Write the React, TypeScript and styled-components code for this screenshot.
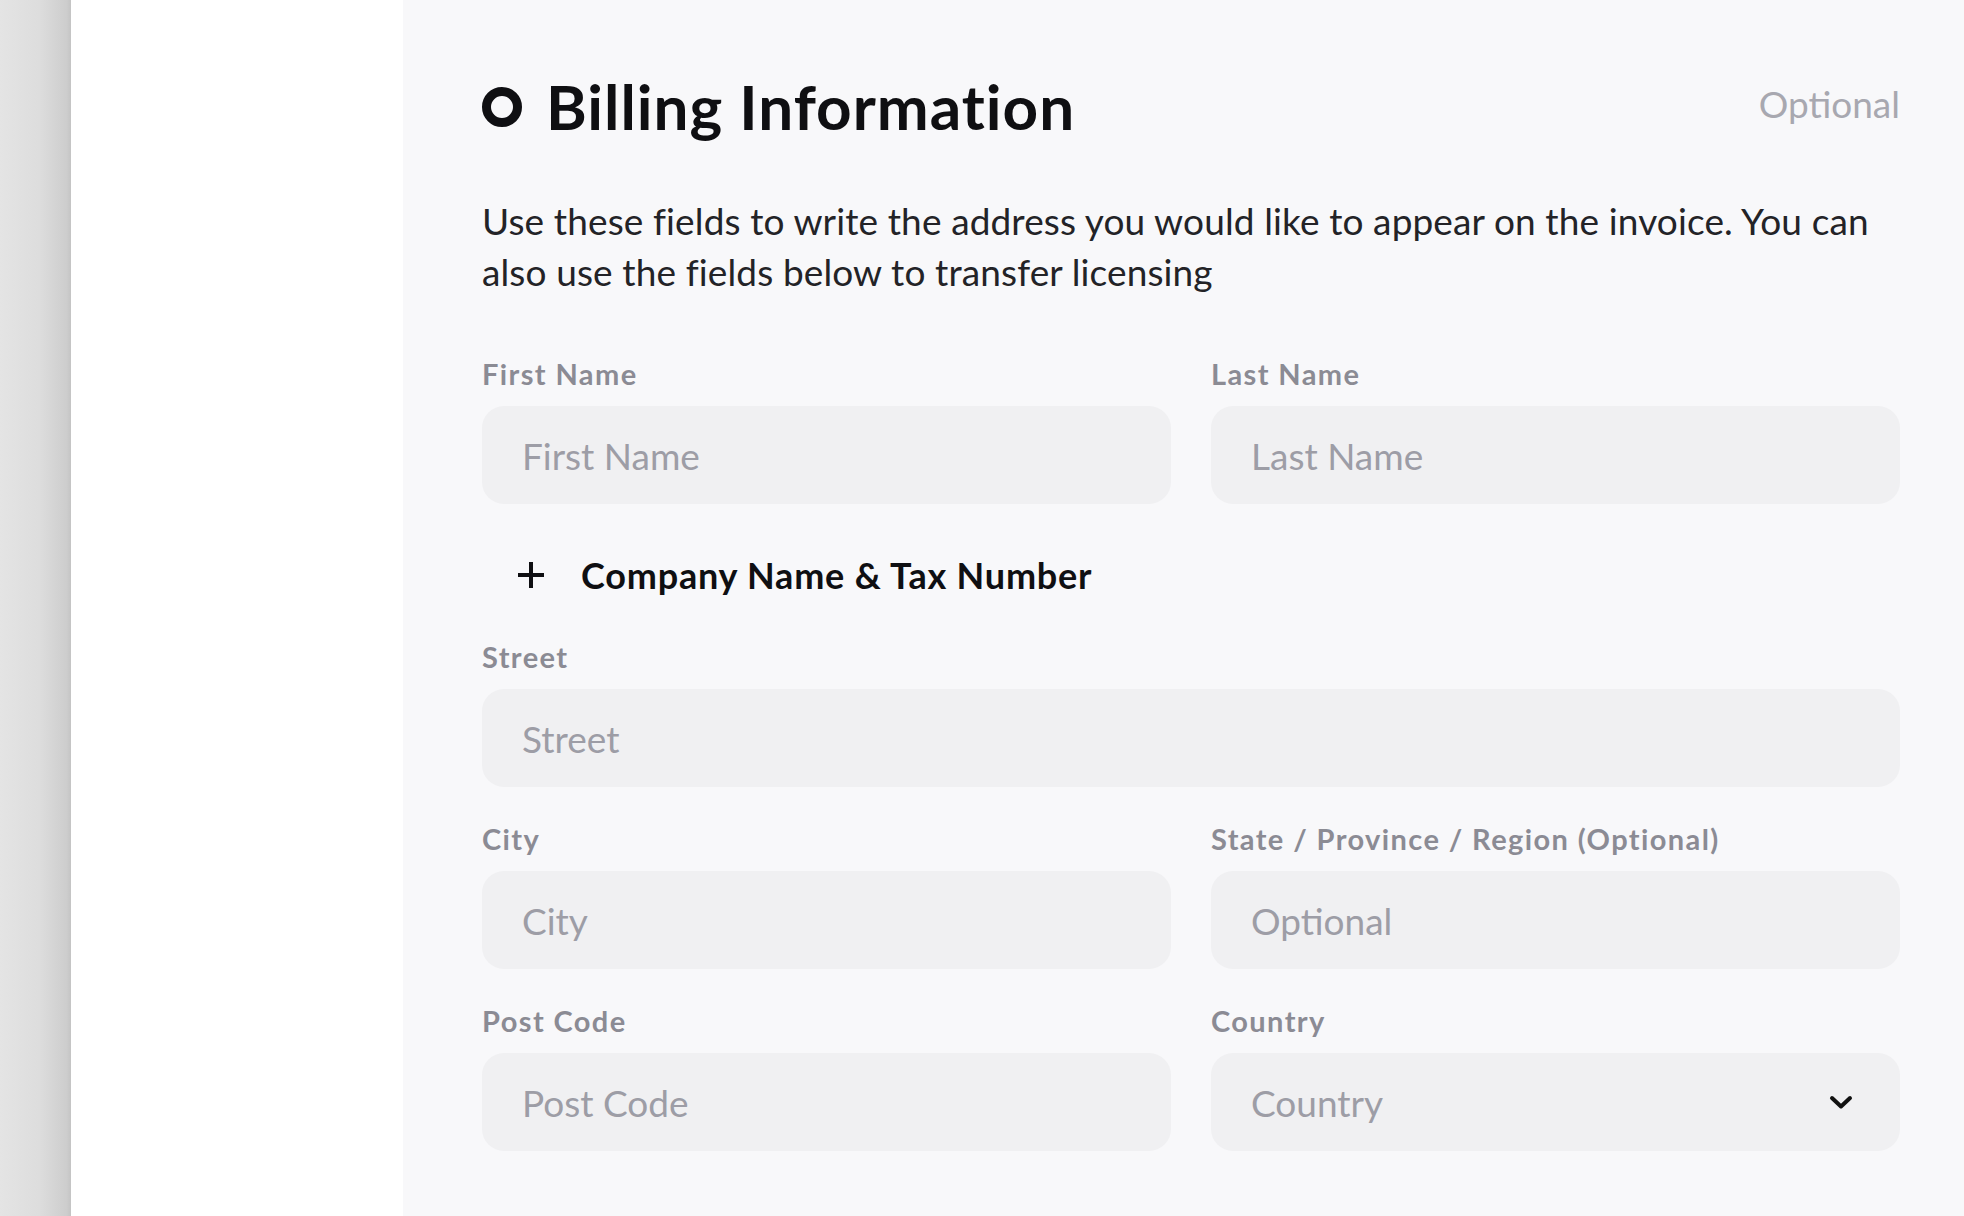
import styled, { createGlobalStyle } from 'styled-components';

const GlobalStyle = createGlobalStyle`
  html, body {
    margin: 0;
    padding: 0;
    height: 100%;
  }
  body {
    font-family: Lato, "Liberation Sans", sans-serif;
    background: #ffffff;
  }
  * {
    box-sizing: border-box;
  }
`;

const Page = styled.div`
  display: flex;
  width: 100%;
  height: 100vh;
  overflow: hidden;
`;

const Backdrop = styled.div`
  width: 71px;
  flex-shrink: 0;
  background: linear-gradient(to right, #e4e4e4 0%, #dddddd 55%, #cdcdcd 94%, #c4c4c4 100%);
`;

const SideColumn = styled.div`
  width: 332px;
  flex-shrink: 0;
  background: #ffffff;
`;

const Panel = styled.section`
  flex: 1;
  background: #f8f8fa;
  padding: 77px 64px 0 79px;
`;

const HeaderRow = styled.div`
  display: flex;
  align-items: center;
  justify-content: space-between;
  height: 60px;
`;

const TitleGroup = styled.div`
  display: flex;
  align-items: center;
  gap: 24px;
`;

const StepRing = styled.span`
  width: 40px;
  height: 40px;
  border-radius: 50%;
  border: 9px solid #0f0f12;
  flex-shrink: 0;
`;

const Title = styled.h2`
  margin: 0;
  font-size: 62px;
  font-weight: 700;
  color: #0f0f12;
  line-height: 60px;
  letter-spacing: 1px;
  margin-top: -3px;
`;

const OptionalTag = styled.span`
  font-size: 37px;
  color: #a8a8b0;
  line-height: 60px;
  margin-top: -6px;
`;

const Description = styled.p`
  margin: 58px 0 0;
  font-size: 37px;
  line-height: 51px;
  color: #232327;
  letter-spacing: 0.12px;
  max-width: 1410px;
`;

const FieldGrid = styled.div<{ $top?: number }>`
  display: grid;
  grid-template-columns: 1fr 1fr;
  column-gap: 40px;
  margin-top: ${(p) => p.$top ?? 0}px;
`;

const Field = styled.label<{ $wide?: boolean }>`
  display: flex;
  flex-direction: column;
  grid-column: ${(p) => (p.$wide ? '1 / -1' : 'auto')};
`;

const FieldLabel = styled.span`
  font-size: 29px;
  font-weight: 700;
  line-height: 26px;
  color: #8b8b94;
  margin-bottom: 19px;
  letter-spacing: 1.4px;
  white-space: nowrap;
`;

const TextInput = styled.input`
  height: 98px;
  border: none;
  border-radius: 22px;
  background: #f0f0f2;
  padding: 0 40px;
  font-family: Lato, "Liberation Sans", sans-serif;
  font-size: 37px;
  color: #222;
  outline: none;
  &::placeholder {
    color: #9d9da6;
  }
`;

const SelectBox = styled.div`
  height: 98px;
  border-radius: 22px;
  background: #f0f0f2;
  padding: 0 47px 0 40px;
  display: flex;
  align-items: center;
  justify-content: space-between;
  font-size: 37px;
  color: #9d9da6;
`;

const AddToggle = styled.button`
  display: flex;
  align-items: center;
  gap: 35px;
  height: 50px;
  margin: 46px 0 44px;
  padding: 0 0 0 34px;
  border: none;
  background: none;
  font-family: Lato, "Liberation Sans", sans-serif;
  font-size: 36px;
  font-weight: 700;
  letter-spacing: 0.8px;
  color: #0f0f12;
  cursor: pointer;
`;

const RowGap = styled.div`
  height: 39px;
`;

const PlusIcon = () => (
  <svg width="30" height="30" viewBox="0 0 30 30">
    <path d="M15 2v26M2 15h26" stroke="#0f0f12" strokeWidth="4" />
  </svg>
);

const ChevronIcon = () => (
  <svg width="24" height="15" viewBox="0 0 24 15">
    <path d="M3 3l9 8.5L21 3" fill="none" stroke="#111" strokeWidth="4" strokeLinecap="round" strokeLinejoin="round" />
  </svg>
);

export default function App() {
  return (
    <>
      <GlobalStyle />
      <Page>
        <Backdrop />
        <SideColumn />
        <Panel>
          <HeaderRow>
            <TitleGroup>
              <StepRing />
              <Title>Billing Information</Title>
            </TitleGroup>
            <OptionalTag>Optional</OptionalTag>
          </HeaderRow>

          <Description>
            Use these fields to write the address you would like to appear on the invoice. You can
            also use the fields below to transfer licensing
          </Description>

          <FieldGrid $top={64}>
            <Field>
              <FieldLabel>First Name</FieldLabel>
              <TextInput placeholder="First Name" />
            </Field>
            <Field>
              <FieldLabel>Last Name</FieldLabel>
              <TextInput placeholder="Last Name" />
            </Field>
          </FieldGrid>

          <AddToggle type="button">
            <PlusIcon />
            Company Name &amp; Tax Number
          </AddToggle>

          <FieldGrid>
            <Field $wide>
              <FieldLabel>Street</FieldLabel>
              <TextInput placeholder="Street" />
            </Field>
          </FieldGrid>
          <RowGap />
          <FieldGrid>
            <Field>
              <FieldLabel>City</FieldLabel>
              <TextInput placeholder="City" />
            </Field>
            <Field>
              <FieldLabel>State / Province / Region (Optional)</FieldLabel>
              <TextInput placeholder="Optional" />
            </Field>
          </FieldGrid>
          <RowGap />
          <FieldGrid>
            <Field>
              <FieldLabel>Post Code</FieldLabel>
              <TextInput placeholder="Post Code" />
            </Field>
            <Field>
              <FieldLabel>Country</FieldLabel>
              <SelectBox>
                Country
                <ChevronIcon />
              </SelectBox>
            </Field>
          </FieldGrid>
        </Panel>
      </Page>
    </>
  );
}
